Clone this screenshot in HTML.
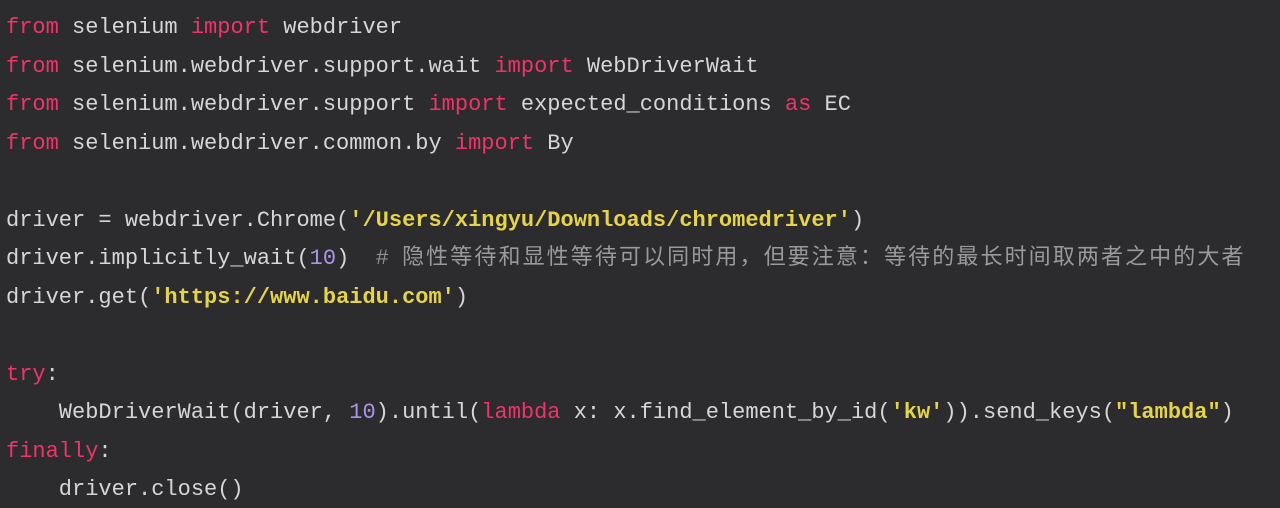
<!DOCTYPE html>
<html><head><meta charset="utf-8"><style>
html,body{margin:0;padding:0;background:#2c2c2e;width:1280px;height:508px;overflow:hidden}
pre{margin:0;padding:9px 0 0 6px;font-family:"Liberation Mono","Noto Sans CJK SC",monospace;font-size:22px;line-height:38.5px;color:#d6d6d6;white-space:pre}
.k{color:#f0336b}
.s{color:#e6d34c;font-weight:bold}
.n{color:#a993e6}
.c{color:#8e8e8e}
.z{font-family:"Noto Sans CJK SC",sans-serif;font-size:22px;letter-spacing:2.1px;color:#9a9a9a;line-height:0}
</style></head><body><pre><span class="k">from</span> selenium <span class="k">import</span> webdriver
<span class="k">from</span> selenium.webdriver.support.wait <span class="k">import</span> WebDriverWait
<span class="k">from</span> selenium.webdriver.support <span class="k">import</span> expected_conditions <span class="k">as</span> EC
<span class="k">from</span> selenium.webdriver.common.by <span class="k">import</span> By

driver = webdriver.Chrome(<span class="s">'/Users/xingyu/Downloads/chromedriver'</span>)
driver.implicitly_wait(<span class="n">10</span>)  <span class="c"># </span><span class="z">隐性等待和显性等待可以同时用，但要注意：等待的最长时间取两者之中的大者</span>
driver.get(<span class="s">'https://www.baidu.com'</span>)

<span class="k">try</span>:
    WebDriverWait(driver, <span class="n">10</span>).until(<span class="k">lambda</span> x: x.find_element_by_id(<span class="s">'kw'</span>)).send_keys(<span class="s">"lambda"</span>)
<span class="k">finally</span>:
    driver.close()
</pre></body></html>
